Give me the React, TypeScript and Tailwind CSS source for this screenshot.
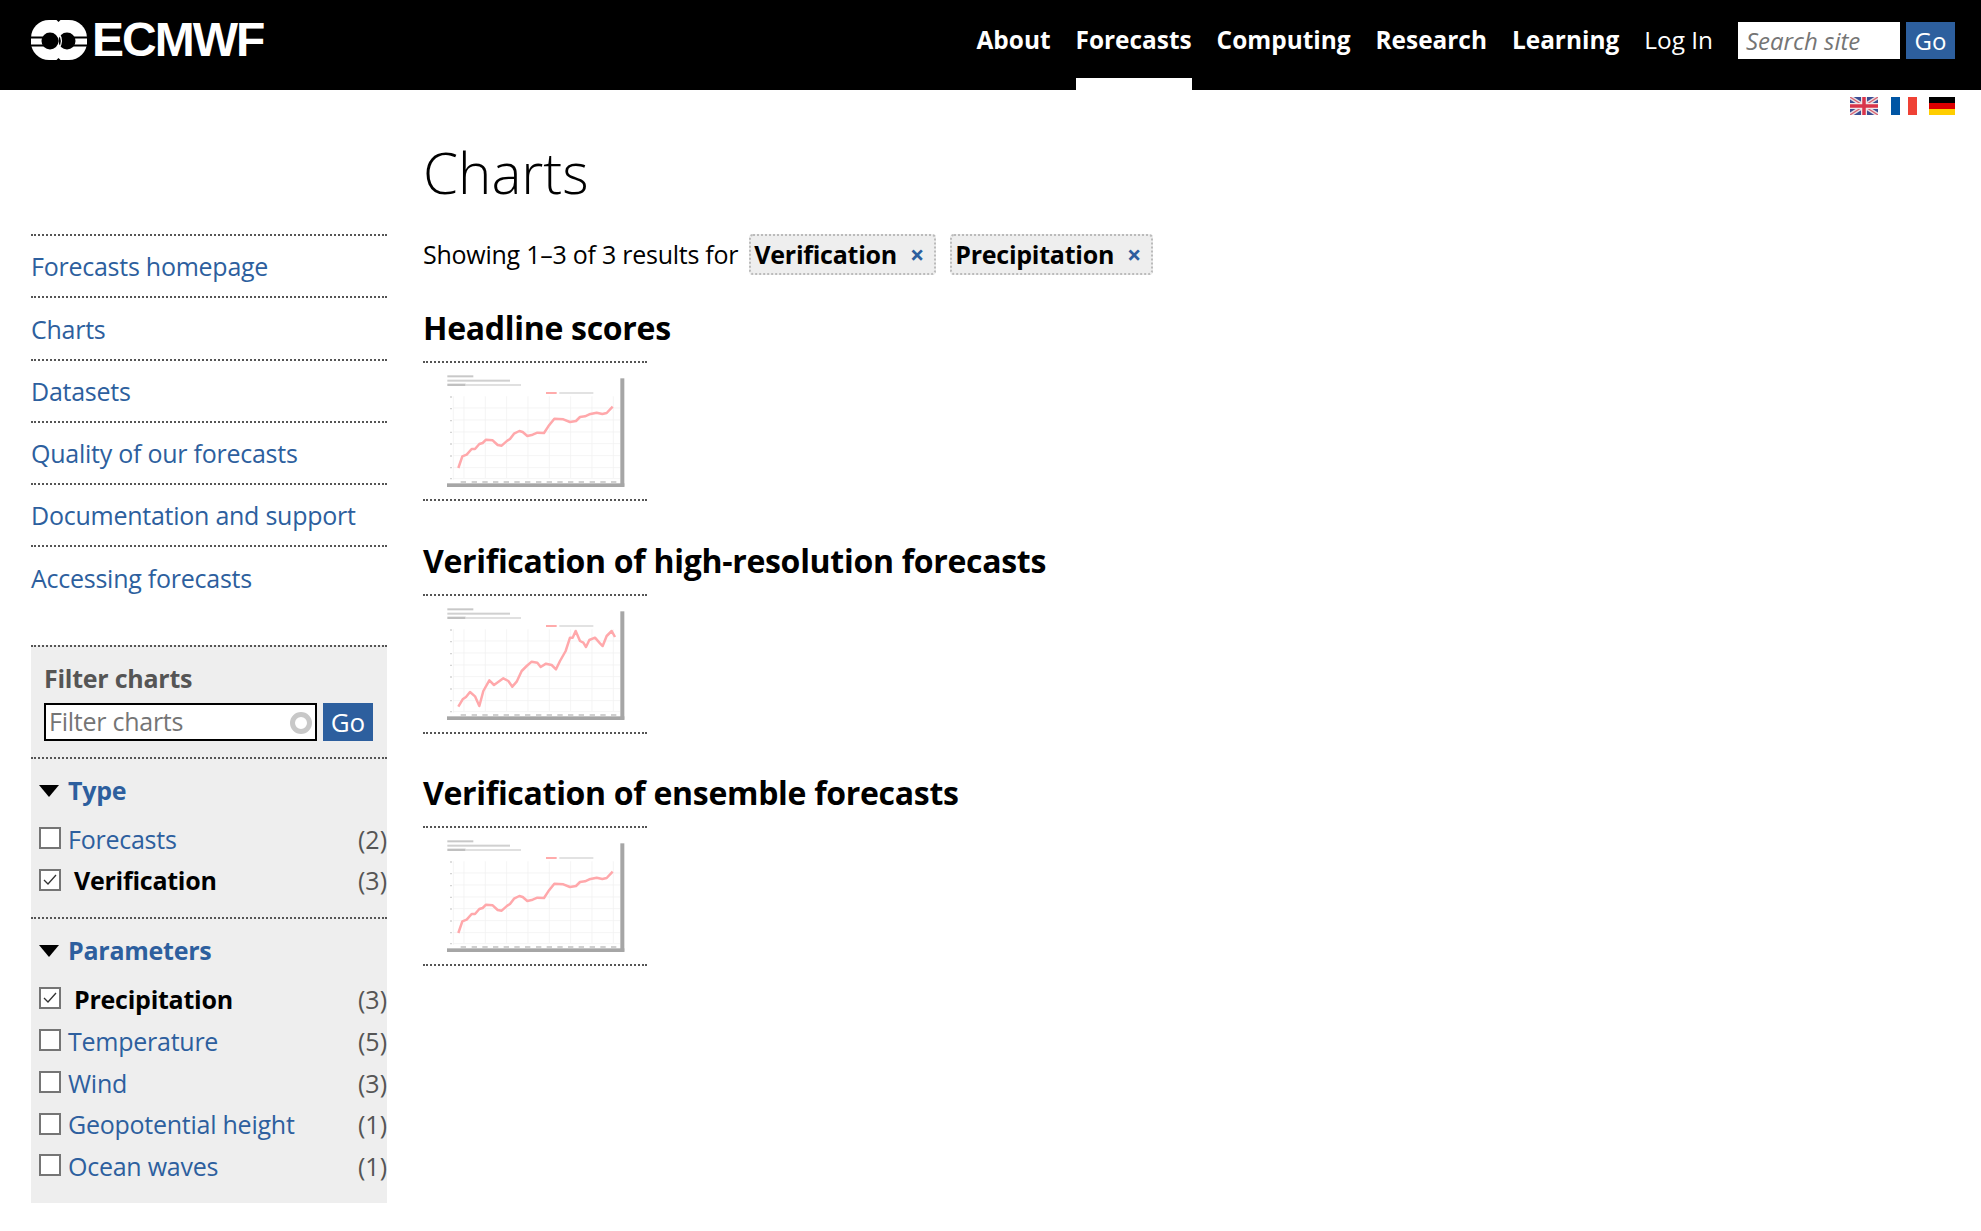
const navItems = ['About', 'Forecasts', 'Computing', 'Research', 'Learning']

const sideLinks = [
  'Forecasts homepage',
  'Charts',
  'Datasets',
  'Quality of our forecasts',
  'Documentation and support',
  'Accessing forecasts',
]

const typeFilters = [
  { label: 'Forecasts', count: 2, checked: false },
  { label: 'Verification', count: 3, checked: true },
]

const paramFilters = [
  { label: 'Precipitation', count: 3, checked: true },
  { label: 'Temperature', count: 5, checked: false },
  { label: 'Wind', count: 3, checked: false },
  { label: 'Geopotential height', count: 1, checked: false },
  { label: 'Ocean waves', count: 1, checked: false },
]

const lineA =
  '115,325 127,290 140,285 155,268 165,268 178,253 188,250 198,240 218,242 233,256 245,258 262,243 270,238 282,222 298,214 308,217 322,229 338,225 352,219 372,220 385,200 403,177 430,179 450,187 468,184 480,172 495,170 508,164 530,159 547,163 560,160 578,141'
const lineB =
  '115,342 128,320 138,313 150,298 165,311 178,340 190,295 208,263 222,277 250,257 265,265 277,282 290,267 305,235 320,220 335,207 352,210 362,223 378,213 395,217 408,230 420,205 437,175 450,135 458,135 467,115 480,145 490,150 498,163 508,142 525,135 540,152 548,160 560,130 575,115 585,133'

const sections = [
  { title: 'Headline scores', line: lineA },
  { title: 'Verification of high-resolution forecasts', line: lineB },
  { title: 'Verification of ensemble forecasts', line: lineA },
]

function Logo() {
  return (
    <div className="flex items-center gap-[5px]">
      <svg width="56" height="40" viewBox="0 0 56 40">
        <rect width="56" height="40" rx="18" fill="#fff" />
        <path d="M25.5 0h4L27.5 2zM25.5 40h4l-2-2z" fill="#000" />
        <path d="M0 16.5h16v10H0zM40 16.5h16v10H40z" fill="#000" />
        <path d="M0 18.5h14v6H0zM42 18.5h14v6H42z" fill="#fff" />
        <circle cx="19" cy="21" r="8.5" fill="#000" />
        <circle cx="36" cy="21" r="8.5" fill="#000" />
        <path d="M27.5 13.5a11 11 0 0 1 0 15" fill="none" stroke="#fff" strokeWidth="1.2" />
      </svg>
      <span className="font-['Liberation_Sans',sans-serif] text-[48px] leading-none font-bold tracking-[-2px] text-white">
        ECMWF
      </span>
    </div>
  )
}

function Flags() {
  return (
    <div className="flex items-center justify-end gap-[12.5px] pt-[7px] pr-[26px]">
      <svg width="28" height="18" viewBox="0 0 28 18">
        <rect width="28" height="18" fill="#3b4f94" />
        <path d="M0 0l28 18M28 0L0 18" stroke="#e8dfe4" strokeWidth="4" />
        <path d="M0 0l28 18M28 0L0 18" stroke="#d8606f" strokeWidth="1.2" />
        <path d="M14 0v18M0 9h28" stroke="#f0e6e8" strokeWidth="6" />
        <path d="M14 0v18M0 9h28" stroke="#d9344a" strokeWidth="3.5" />
      </svg>
      <svg width="26" height="18" viewBox="0 0 26 18">
        <rect width="9" height="18" fill="#0055a4" />
        <rect x="17" width="9" height="18" fill="#ef4135" />
      </svg>
      <svg width="26" height="18" viewBox="0 0 26 18">
        <rect width="26" height="6" fill="#000" />
        <rect y="6" width="26" height="6" fill="#dd0000" />
        <rect y="12" width="26" height="6" fill="#ffce00" />
      </svg>
    </div>
  )
}

function Chart({ line }: { line: string }) {
  return (
    <svg width="178" height="112" viewBox="81 46 534 336" className="block blur-[0.5px]">
      <rect x="82" y="47" width="78" height="6" fill="#c8c8c8" />
      <rect x="82" y="60" width="188" height="6" fill="#d0d0d0" />
      <rect x="82" y="72" width="55" height="7" fill="#c0c0c0" />
      <rect x="137" y="73" width="166" height="6" fill="#e0e0e0" />
      <path d="M378 100h32" stroke="#ffabab" strokeWidth="6" />
      <rect x="418" y="97" width="102" height="6" fill="#e2e2e2" />
      <path
        d="M100 110v250M100 145h500M100 181h500M100 217h500M100 252h500M100 288h500M100 324h500M100 357h500M132 110v245M196 110v245M260 110v245M324 110v245M388 110v245M452 110v245M516 110v245M580 110v245"
        stroke="#f2f2f2"
        strokeWidth="2.5"
        fill="none"
      />
      <rect x="70" y="230" width="10" height="12" fill="#c4c4c4" />
      <path d="M90 112h6M90 147h6M90 183h6M90 218h6M90 253h6M90 289h6M90 324h6M90 357h6" stroke="#d4d4d4" strokeWidth="4" />
      <path d="M122 367h16M155 367h16M187 367h16M219 367h16M251 367h16M283 367h16M315 367h16M348 367h16M380 367h16M412 367h16M444 367h16M476 367h16M509 367h16M541 367h16M573 367h16" stroke="#d0d0d0" strokeWidth="6" />
      <polyline points={line} fill="none" stroke="#ffa8ab" strokeWidth="7.5" strokeLinejoin="round" />
      <rect x="601" y="56" width="12" height="325" fill="#a6a6a6" />
      <rect x="81" y="371" width="532" height="11" fill="#a6a6a6" />
    </svg>
  )
}

function Chip({ label }: { label: string }) {
  return (
    <span className="flex h-[41px] items-center rounded-[4px] border-2 border-dotted border-[#bbb] bg-[#eee] pr-[10px] pl-[3px]">
      <span className="text-[25px] font-bold tracking-[-0.25px] text-black">{label}</span>
      <span className="ml-[13px] text-[25px] leading-none font-bold text-[#2d5f9e]">×</span>
    </span>
  )
}

function FilterRow({ label, count, checked }: { label: string; count: number; checked: boolean }) {
  return (
    <div className="flex h-[41.75px] items-center justify-between">
      <div className="flex items-center">
        <span className="mb-[3px] flex h-[22px] w-[22px] items-center justify-center border-[2.5px] border-[#757575] bg-white">
          {checked && (
            <svg width="14" height="12" viewBox="0 0 14 12">
              <path d="M1 6l4 4 8-9" fill="none" stroke="#333" strokeWidth="1.3" />
            </svg>
          )}
        </span>
        {checked ? (
          <span className="ml-[13px] text-[25px] font-bold tracking-[-0.25px] text-black">{label}</span>
        ) : (
          <span className="ml-[7px] text-[25px] tracking-[-0.25px] text-[#2d5f9e]">{label}</span>
        )}
      </div>
      <span className="text-[25px] text-[#555]">({count})</span>
    </div>
  )
}

function FilterGroup({ title, items }: { title: string; items: typeof typeFilters }) {
  return (
    <div className="border-t-2 border-dotted border-[#555] pt-[10px] pb-[15px] pl-[8px]">
      <div className="mb-[6px] flex h-[44px] items-center gap-[9px]">
        <svg width="20" height="12" viewBox="0 0 20 12">
          <path d="M0 0h20L10 12z" fill="#000" />
        </svg>
        <span className="text-[25px] font-bold tracking-[-0.25px] text-[#2d5f9e]">{title}</span>
      </div>
      {items.map((item) => (
        <FilterRow key={item.label} {...item} />
      ))}
    </div>
  )
}

function Sidebar() {
  return (
    <aside className="w-[356px] shrink-0 pt-[119px]">
      {sideLinks.map((link) => (
        <div key={link} className="flex h-[62.25px] items-center border-t-2 border-dotted border-[#555] pt-[2px]">
          <a className="text-[25px] tracking-[-0.25px] text-[#2d5f9e]">{link}</a>
        </div>
      ))}
      <div className="mt-[37px] bg-[#eee]">
        <div className="border-t-2 border-dotted border-[#555] px-[13px] pt-[14px] pb-[16px]">
          <div className="mb-[4px] h-[38px] text-[25px] leading-[35px] font-bold tracking-[-0.25px] text-[#555]">
            Filter charts
          </div>
          <div className="flex gap-[6px]">
            <div className="flex h-[38px] w-[273px] items-center justify-between border-[2.5px] border-black bg-white pr-[3.5px] pl-[3px]">
              <span className="text-[25px] tracking-[-0.25px] text-[#757575]">Filter charts</span>
              <span className="mt-[3px] h-[22px] w-[22px] rounded-full border-[5px] border-[#c8c8c8]" />
            </div>
            <button className="h-[38px] w-[50px] bg-[#2d5f9e] pb-[2px] text-[26px] text-white">Go</button>
          </div>
        </div>
        <FilterGroup title="Type" items={typeFilters} />
        <FilterGroup title="Parameters" items={paramFilters} />
      </div>
    </aside>
  )
}

export default function App() {
  return (
    <div className="min-h-[1231px] bg-white font-['Open_Sans',sans-serif]">
      <header className="flex h-[90px] items-stretch justify-between bg-black pr-[26px] pl-[31px]">
        <div className="flex items-center pb-[10px]">
          <Logo />
        </div>
        <nav className="flex items-stretch gap-[25px]">
          {navItems.map((item) => (
            <a
              key={item}
              className={
                item === 'Forecasts'
                  ? 'flex items-center border-b-[12px] border-white pt-[2px] text-[24.4px] font-bold text-white'
                  : 'flex items-center pb-[10px] text-[24.4px] font-bold text-white'
              }
            >
              {item}
            </a>
          ))}
          <a className="flex items-center pb-[10px] text-[24.4px] text-white">Log In</a>
          <div className="flex items-center gap-[6px] pb-[9px]">
            <span className="flex h-[37px] w-[162px] items-center bg-white pl-[8px] text-[24px] text-[#757575] italic">
              Search site
            </span>
            <button className="h-[37px] w-[49px] bg-[#2d5f9e] text-[24px] text-white">Go</button>
          </div>
        </nav>
      </header>
      <Flags />
      <div className="flex pl-[31px]">
        <Sidebar />
        <main className="ml-[36px]">
          <h1 className="mt-[18px] text-[56.5px] leading-[80px] font-light text-black">Charts</h1>
          <div className="mt-[21px] flex h-[41px] items-center">
            <span className="mr-[11px] text-[25px] tracking-[-0.25px] text-black">Showing 1–3 of 3 results for</span>
            <div className="flex gap-[14px]">
              <Chip label="Verification" />
              <Chip label="Precipitation" />
            </div>
          </div>
          <div className="mt-[32px]">
            {sections.map((section) => (
              <section key={section.title} className="h-[232.5px]">
                <h2 className="h-[54px] text-[32px] leading-[42px] font-bold tracking-[-0.3px] text-black">
                  {section.title}
                </h2>
                <div className="w-[224px] border-y-2 border-dotted border-[#555] pt-[12px] pb-[12px] pl-[24px]">
                  <Chart line={section.line} />
                </div>
              </section>
            ))}
          </div>
        </main>
      </div>
    </div>
  )
}
